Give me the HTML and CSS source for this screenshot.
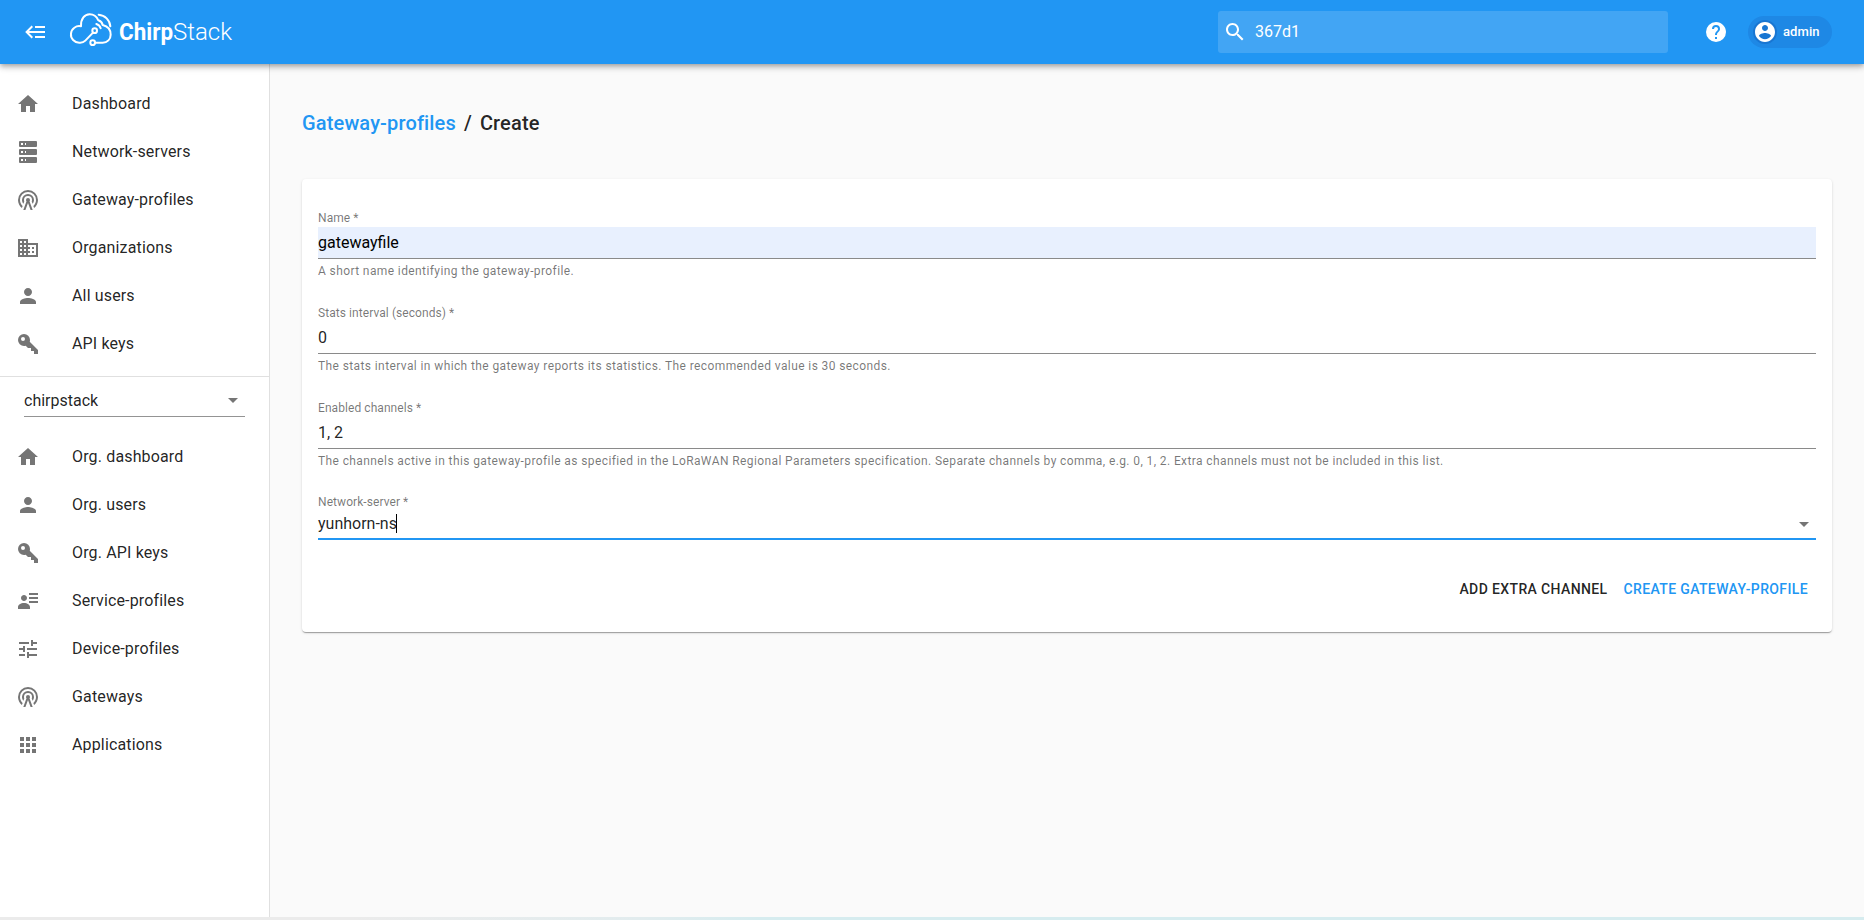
FILE: index.html
```html
<!DOCTYPE html>
<html lang="en">
<head>
    <meta charset="UTF-8">
    <meta name="viewport" content="width=device-width, initial-scale=1.0">
    <title>ChirpStack Application Server</title>
    <link rel="stylesheet" href="styles.css">
</head>
<body>
    <svg class="icon-defs" aria-hidden="true">
        <symbol id="home" viewBox="0 0 24 24"><path d="M10 20v-6h4v6h5v-8h3L12 3 2 12h3v8z"/></symbol>
        <symbol id="server" viewBox="0 0 24 24"><path d="M4,1H20A1,1 0 0,1 21,2V6A1,1 0 0,1 20,7H4A1,1 0 0,1 3,6V2A1,1 0 0,1 4,1M4,9H20A1,1 0 0,1 21,10V14A1,1 0 0,1 20,15H4A1,1 0 0,1 3,14V10A1,1 0 0,1 4,9M4,17H20A1,1 0 0,1 21,18V22A1,1 0 0,1 20,23H4A1,1 0 0,1 3,22V18A1,1 0 0,1 4,17M9,5H10V3H9V5M9,13H10V11H9V13M9,21H10V19H9V21M5,3V5H7V3H5M5,11V13H7V11H5M5,19V21H7V19H5Z"/></symbol>
        <symbol id="tower" viewBox="0 0 24 24"><path d="M12,10A2,2 0 0,1 14,12C14,12.5 13.82,12.95 13.5,13.3L16.7,22H14.57L12,14.97L9.43,22H7.3L10.5,13.3C10.18,12.95 10,12.5 10,12A2,2 0 0,1 12,10M12,8A4,4 0 0,0 8,12C8,12.5 8.1,13 8.28,13.46L7.4,15.86C6.53,14.81 6,13.47 6,12A6,6 0 0,1 12,6A6,6 0 0,1 18,12C18,13.47 17.47,14.81 16.6,15.86L15.72,13.46C15.9,13 16,12.5 16,12A4,4 0 0,0 12,8M12,4A8,8 0 0,0 4,12C4,14.36 5,16.5 6.64,17.94L5.92,19.94C3.54,18.11 2,15.23 2,12A10,10 0 0,1 12,2A10,10 0 0,1 22,12C22,15.23 20.46,18.11 18.08,19.94L17.36,17.94C19,16.5 20,14.36 20,12A8,8 0 0,0 12,4Z"/></symbol>
        <symbol id="domain" viewBox="0 0 24 24"><path d="M12 7V3H2v18h20V7H12zM6 19H4v-2h2v2zm0-4H4v-2h2v2zm0-4H4V9h2v2zm0-4H4V5h2v2zm4 12H8v-2h2v2zm0-4H8v-2h2v2zm0-4H8V9h2v2zm0-4H8V5h2v2zm10 12h-8v-2h2v-2h-2v-2h2v-2h-2V9h8v10zm-2-8h-2v2h2v-2zm0 4h-2v2h2v-2z"/></symbol>
        <symbol id="person" viewBox="0 0 24 24"><path d="M12 12c2.21 0 4-1.79 4-4s-1.79-4-4-4-4 1.79-4 4 1.79 4 4 4zm0 2c-2.67 0-8 1.34-8 4v2h16v-2c0-2.66-5.33-4-8-4z"/></symbol>
        <symbol id="key" viewBox="0 0 24 24"><path d="M22,18V22H18V19H15V16H12L9.74,13.74C9.19,13.91 8.61,14 8,14A6,6 0 0,1 2,8A6,6 0 0,1 8,2A6,6 0 0,1 14,8C14,8.61 13.91,9.19 13.74,9.74L22,18M7,5A2,2 0 0,0 5,7A2,2 0 0,0 7,9A2,2 0 0,0 9,7A2,2 0 0,0 7,5Z"/></symbol>
        <symbol id="details" viewBox="0 0 24 24"><path d="M11 9C11 10.66 9.66 12 8 12C6.34 12 5 10.66 5 9C5 7.34 6.34 6 8 6C9.66 6 11 7.34 11 9M14 20H2V18C2 15.79 4.69 14 8 14C11.31 14 14 15.79 14 18V20M22 12V14H13V12H22M22 8V10H13V8H22M22 4V6H13V4H22Z"/></symbol>
        <symbol id="tune" viewBox="0 0 24 24"><path d="M3 17v2h6v-2H3zM3 5v2h10V5H3zm10 16v-2h8v-2h-8v-2h-2v6h2zM7 9v2H3v2h4v2h2V9H7zm14 4v-2H11v2h10zm-6-4h2V7h4V5h-4V3h-2v6z"/></symbol>
        <symbol id="apps" viewBox="0 0 24 24"><path d="M4 8h4V4H4v4zm6 12h4v-4h-4v4zm-6 0h4v-4H4v4zm0-6h4v-4H4v4zm6 0h4v-4h-4v4zm6-10v4h4V4h-4zm-6 4h4V4h-4v4zm6 6h4v-4h-4v4zm0 6h4v-4h-4v4z"/></symbol>
        <symbol id="burger" viewBox="0 0 24 24"><path d="M5,13L9,17L7.6,18.42L1.18,12L7.6,5.58L9,7L5,11H21V13H5M21,6V8H11V6H21M21,16V18H11V16H21Z"/></symbol>
        <symbol id="search" viewBox="0 0 24 24"><path d="M15.5 14h-.79l-.28-.27C15.41 12.59 16 11.11 16 9.5 16 5.91 13.09 3 9.5 3S3 5.91 3 9.5 5.91 16 9.5 16c1.61 0 3.09-.59 4.23-1.57l.27.28v.79l5 4.99L20.49 19l-4.99-5zm-6 0C7.01 14 5 11.99 5 9.5S7.01 5 9.5 5 14 7.01 14 9.5 11.99 14 9.5 14z"/></symbol>
        <symbol id="help" viewBox="0 0 24 24"><path d="M15.07,11.25L14.17,12.17C13.45,12.89 13,13.5 13,15H11V14.5C11,13.39 11.45,12.39 12.17,11.67L13.41,10.41C13.78,10.05 14,9.55 14,9C14,7.89 13.1,7 12,7A2,2 0 0,0 10,9H8A4,4 0 0,1 12,5A4,4 0 0,1 16,9C16,9.88 15.64,10.67 15.07,11.25M13,19H11V17H13M12,2A10,10 0 0,0 2,12A10,10 0 0,0 12,22A10,10 0 0,0 22,12C22,6.47 17.5,2 12,2Z"/></symbol>
        <symbol id="account" viewBox="0 0 24 24"><path d="M12 2C6.48 2 2 6.48 2 12s4.48 10 10 10 10-4.48 10-10S17.52 2 12 2zm0 3c1.66 0 3 1.34 3 3s-1.34 3-3 3-3-1.34-3-3 1.34-3 3-3zm0 14.2c-2.5 0-4.71-1.28-6-3.22.03-1.99 4-3.08 6-3.08 1.99 0 5.97 1.09 6 3.08-1.29 1.94-3.5 3.22-6 3.22z"/></symbol>
    </svg>

    <header class="appbar">
        <button class="menu-button"><svg class="icon"><use href="#burger"/></svg></button>
        <div class="logo">
            <svg class="logo-cloud" viewBox="0 0 132 105">
                <path d="M72 62L49 86Q42 93 31 92A24.8 24.8 0 1 1 36 43C35 20 47 7 62 7C75 7 83 14 88 25Q99 28 101 39C117 43 125 54 125 68C125 82 115 92 101 92H78"/>
                <path d="M82 36A19 19 0 0 1 95 49M89 8A38 38 0 0 1 124 43"/>
                <circle cx="77" cy="56" r="7"/>
                <circle cx="71" cy="92" r="7"/>
            </svg>
            <svg class="logo-name" viewBox="0 0 116 32">
                <text class="logo-bold" x="0" y="24" textLength="54" lengthAdjust="spacingAndGlyphs">Chirp</text>
                <text class="logo-thin" x="54" y="24" textLength="59" lengthAdjust="spacingAndGlyphs">Stack</text>
            </svg>
        </div>
        <div class="search">
            <svg class="icon"><use href="#search"/></svg>
            <span class="search-text">367d1</span>
        </div>
        <button class="help-button"><svg class="icon"><use href="#help"/></svg></button>
        <div class="chip">
            <span class="avatar"><svg class="icon"><use href="#account"/></svg></span>
            <span class="chip-label">admin</span>
        </div>
    </header>

    <div class="page">
        <nav class="drawer">
            <ul class="menu">
                <li><svg class="icon"><use href="#home"/></svg>Dashboard</li>
                <li><svg class="icon"><use href="#server"/></svg>Network-servers</li>
                <li><svg class="icon"><use href="#tower"/></svg>Gateway-profiles</li>
                <li><svg class="icon"><use href="#domain"/></svg>Organizations</li>
                <li><svg class="icon"><use href="#person"/></svg>All users</li>
                <li><svg class="icon"><use href="#key"/></svg>API keys</li>
            </ul>
            <div class="org-select">
                <span>chirpstack</span>
                <span class="caret-down"></span>
            </div>
            <ul class="menu">
                <li><svg class="icon"><use href="#home"/></svg>Org. dashboard</li>
                <li><svg class="icon"><use href="#person"/></svg>Org. users</li>
                <li><svg class="icon"><use href="#key"/></svg>Org. API keys</li>
                <li><svg class="icon"><use href="#details"/></svg>Service-profiles</li>
                <li><svg class="icon"><use href="#tune"/></svg>Device-profiles</li>
                <li><svg class="icon"><use href="#tower"/></svg>Gateways</li>
                <li><svg class="icon"><use href="#apps"/></svg>Applications</li>
            </ul>
        </nav>

        <main class="content">
            <h1 class="title"><a>Gateway-profiles</a><span class="slash">/</span><span>Create</span></h1>

            <form class="card">
                <div class="field">
                    <label>Name *</label>
                    <div class="input autofill">gatewayfile</div>
                    <p class="helper">A short name identifying the gateway-profile.</p>
                </div>
                <div class="field">
                    <label>Stats interval (seconds) *</label>
                    <div class="input">0</div>
                    <p class="helper">The stats interval in which the gateway reports its statistics. The recommended value is 30 seconds.</p>
                </div>
                <div class="field">
                    <label>Enabled channels *</label>
                    <div class="input">1, 2</div>
                    <p class="helper">The channels active in this gateway-profile as specified in the LoRaWAN Regional Parameters specification. Separate channels by comma, e.g. 0, 1, 2. Extra channels must not be included in this list.</p>
                </div>
                <div class="field select-field">
                    <label>Network-server *</label>
                    <div class="select focused">
                        <span>yunhorn-ns</span><span class="cursor"></span>
                        <span class="caret-down"></span>
                    </div>
                </div>
                <div class="actions">
                    <button type="button" class="btn">Add extra channel</button>
                    <button type="button" class="btn btn-primary">Create gateway-profile</button>
                </div>
            </form>
        </main>
    </div>
    <footer class="footer"></footer>
</body>
</html>
```
FILE: styles.css
```css
* {
    box-sizing: border-box;
}

body {
    margin: 0;
    height: 920px;
    display: flex;
    flex-direction: column;
    overflow: hidden;
    font-family: Roboto, "Liberation Sans", sans-serif;
    font-size: 16px;
    color: rgba(0, 0, 0, 0.87);
    background-color: #fafafa;
}

button {
    font-family: inherit;
    border: none;
    padding: 0;
    background: none;
    color: inherit;
}

.icon-defs {
    display: none;
}

.icon {
    width: 24px;
    height: 24px;
    flex-shrink: 0;
    display: block;
    fill: currentColor;
}

/* top bar */
.appbar {
    height: 64px;
    flex-shrink: 0;
    display: flex;
    align-items: center;
    padding: 0 32px 0 24px;
    position: relative;
    z-index: 1;
    color: #fff;
    background-color: #2196f3;
    box-shadow: 0 2px 4px -1px rgba(0, 0, 0, 0.2), 0 4px 5px 0 rgba(0, 0, 0, 0.14), 0 1px 10px 0 rgba(0, 0, 0, 0.12);
}

.logo {
    display: flex;
    align-items: center;
    margin-left: 21px;
    height: 64px;
}

.logo-cloud {
    width: 44px;
    height: 35px;
    margin-bottom: 6px;
    fill: none;
    stroke: #fff;
    stroke-width: 6;
    stroke-linecap: round;
    stroke-linejoin: round;
}

.logo-name {
    width: 116px;
    height: 32px;
    margin-left: 6px;
    fill: #fff;
    font-size: 24.5px;
}

.logo-bold {
    font-weight: 700;
}

.logo-thin {
    font-weight: 300;
}

.search {
    width: 450px;
    height: 42px;
    margin-left: auto;
    padding-left: 5px;
    display: flex;
    align-items: center;
    gap: 8px;
    border-radius: 3px;
    background-color: rgba(255, 255, 255, 0.15);
}

.search-text,
.chip-label {
    padding-bottom: 2px;
}

.help-button {
    margin: 0 20px 0 36px;
}

.chip {
    width: 84px;
    height: 32px;
    padding-left: 5px;
    display: flex;
    align-items: center;
    gap: 6px;
    border-radius: 16px;
    font-size: 13px;
    font-weight: 500;
    letter-spacing: 0.1px;
    background-color: #1e88e5;
}

.avatar {
    border-radius: 50%;
    background-color: #1976d2;
}

/* drawer */
.page {
    display: flex;
    flex: 1;
}

.drawer {
    width: 270px;
    flex-shrink: 0;
    padding-top: 8px;
    background-color: #fff;
    border-right: 1px solid #e0e0e0;
}

.menu {
    list-style: none;
    margin: 0;
    padding: 8px 0;
}

.menu li {
    height: 48px;
    display: flex;
    align-items: center;
    gap: 32px;
    padding: 0 0 2px 16px;
    letter-spacing: 0.15px;
}

.menu .icon {
    margin-top: 2px;
    color: #757575;
}

.org-select {
    display: flex;
    justify-content: space-between;
    align-items: center;
    height: 33px;
    margin: 7px 24px 8px;
    padding: 1px 7px 0 0;
    border-bottom: 1px solid #949494;
}

/* the line above the organization selector */
.menu:first-child {
    border-bottom: 1px solid #e0e0e0;
}

.caret-down {
    border: 5px solid transparent;
    border-top-color: #757575;
    border-bottom: none;
}

/* content */
.content {
    flex: 1;
    padding: 46px 32px 0;
}

.title {
    display: flex;
    gap: 8px;
    margin: 0 0 42px;
    font-size: 20px;
    line-height: 27px;
    font-weight: 500;
    letter-spacing: 0.15px;
}

.title a {
    color: #2196f3;
}

.card {
    height: 453px;
    padding: 32px 16px 0;
    background-color: #fff;
    border-radius: 4px;
    box-shadow: 0 2px 1px -1px rgba(0, 0, 0, 0.2), 0 1px 1px 0 rgba(0, 0, 0, 0.14), 0 1px 3px 0 rgba(0, 0, 0, 0.12);
}

.field {
    height: 71px;
    margin-bottom: 24px;
}

.field label {
    display: block;
    height: 16px;
    font-size: 12px;
    line-height: 15px;
    color: rgba(0, 0, 0, 0.54);
    letter-spacing: 0.07px;
}

.input {
    height: 32px;
    padding-top: 6px;
    line-height: 19px;
    border-bottom: 1px solid #8a8a8a;
}

.autofill {
    color: #000;
    background-color: #e8f0fe;
}

.helper {
    margin: 3px 0 0;
    font-size: 12px;
    line-height: 18px;
    letter-spacing: 0.395px;
    color: rgba(0, 0, 0, 0.54);
}

.select {
    display: flex;
    align-items: center;
    height: 28px;
    padding: 0 7px 4px 0;
}

.focused {
    border-bottom: 2px solid #2196f3;
}

.select .caret-down {
    margin: 2px 0 0 auto;
}

.cursor {
    width: 1px;
    height: 19px;
    margin-left: -1px;
    background-color: #000;
}

.actions {
    display: flex;
    justify-content: flex-end;
}

.select-field {
    height: 75px;
    margin-bottom: 0;
}

.select-field label {
    line-height: 13px;
}

.btn {
    height: 36px;
    padding: 0 8px;
    font-size: 14px;
    font-weight: 500;
    letter-spacing: 0.37px;
    text-transform: uppercase;
}

.btn-primary {
    color: #2196f3;
}

.footer {
    height: 3px;
    flex-shrink: 0;
    background: linear-gradient(to right, #ebebeb 350px, #e2ecee 640px, #d6ecef 760px);
}
```
